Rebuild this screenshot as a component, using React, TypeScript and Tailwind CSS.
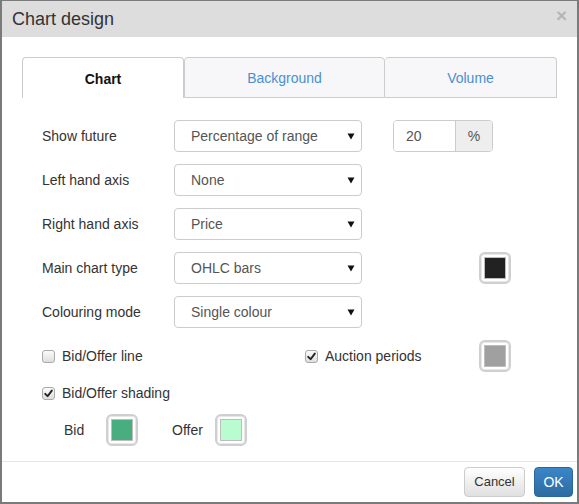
import React from "react";

const font = "font-['Liberation_Sans',Arial,sans-serif]";

function Select({ value }: { value: string }) {
  return (
    <div className="w-[188px] h-[32px] border border-[#cccccc] rounded-[4px] bg-white flex items-center justify-between pl-[16px] pr-[6px] text-[14px] text-[#555]">
      <span>{value}</span>
      <svg width="8" height="8" viewBox="0 0 8 8">
        <path d="M0.5 1.5 L7.5 1.5 L4 7.5 Z" fill="#111" />
      </svg>
    </div>
  );
}

function Swatch({ color }: { color: string }) {
  return (
    <div className="w-[32px] h-[32px] rounded-[6px] border-2 border-[#cfcfcf] bg-white flex items-center justify-center shadow-[inset_0_0_0_1px_#e8e8e8]">
      <div className="w-[22px] h-[22px] border border-[#bdbdbd] flex items-center justify-center bg-white">
        <div className="w-[20px] h-[20px]" style={{ backgroundColor: color }} />
      </div>
    </div>
  );
}

function Check({ checked }: { checked: boolean }) {
  return (
    <div className="w-[13px] h-[13px] rounded-[3px] border border-[#a9a9a9] bg-gradient-to-b from-[#fbfbfb] to-[#dedede] flex items-center justify-center">
      {checked && (
        <svg width="9" height="9" viewBox="0 0 9 9">
          <path d="M1.2 4.8 L3.6 7.2 L7.8 1.6" stroke="#222" strokeWidth="1.9" fill="none" strokeLinecap="round" strokeLinejoin="round" />
        </svg>
      )}
    </div>
  );
}

function Row({ label, children }: { label: string; children: React.ReactNode }) {
  return (
    <div className="flex items-center h-[32px]">
      <div className="w-[132px] text-[14px] text-[#333]">{label}</div>
      {children}
    </div>
  );
}

export default function App() {
  return (
    <div className={`${font} w-[579px] h-[504px] bg-white border-t border-l-2 border-r-2 border-b-2 border-[#7a7a7a] flex flex-col`}>
      <div className="h-[36px] bg-[#dddddd] flex items-center justify-between pl-[10px] pr-[10px]">
        <div className="text-[18px] text-[#333]">Chart design</div>
        <div className="text-[19px] font-bold text-[#b5b5b5] leading-none -mt-[7px]">×</div>
      </div>
      <div className="h-[424px] px-[20px] pt-[20px]">
        <div className="flex h-[41px]">
          <div className="w-[162px] pt-[2px] border-l border-t border-r border-[#cccccc] rounded-t-[4px] bg-white flex items-center justify-center text-[14px] font-bold text-[#111]">
            Chart
          </div>
          <div className="w-[201px] pt-[2px] border border-[#cccccc] rounded-t-[4px] bg-[#f7f7f9] flex items-center justify-center text-[14px] text-[#4a90d0]">
            Background
          </div>
          <div className="w-[172px] pt-[2px] border border-l-0 border-[#cccccc] rounded-t-[4px] bg-[#f7f7f9] flex items-center justify-center text-[14px] text-[#4a90d0]">
            Volume
          </div>
        </div>
        <div className="pl-[20px] pt-[22px] flex flex-col gap-[12px]">
          <Row label="Show future">
            <Select value="Percentage of range" />
            <div className="ml-[31px] flex h-[32px] w-[100px] border border-[#cccccc] rounded-[4px] overflow-hidden text-[14px] text-[#555]">
              <div className="flex-1 flex items-center pl-[12px] bg-white">20</div>
              <div className="w-[37px] bg-[#eeeeee] border-l border-[#cccccc] flex items-center justify-center">%</div>
            </div>
          </Row>
          <Row label="Left hand axis">
            <Select value="None" />
          </Row>
          <Row label="Right hand axis">
            <Select value="Price" />
          </Row>
          <Row label="Main chart type">
            <Select value="OHLC bars" />
            <div className="ml-[117px]">
              <Swatch color="#222222" />
            </div>
          </Row>
          <Row label="Colouring mode">
            <Select value="Single colour" />
          </Row>
          <div className="flex items-center h-[32px]">
            <div className="w-[263px] flex items-center gap-[7px] text-[14px] text-[#333]">
              <Check checked={false} />
              <span>Bid/Offer line</span>
            </div>
            <div className="w-[174px] flex items-center gap-[7px] text-[14px] text-[#333]">
              <Check checked={true} />
              <span>Auction periods</span>
            </div>
            <Swatch color="#a0a0a0" />
          </div>
          <div className="flex items-center h-[20px] -mt-[1px] gap-[7px] text-[14px] text-[#333]">
            <Check checked={true} />
            <span>Bid/Offer shading</span>
          </div>
          <div className="flex items-center h-[32px] -mt-[1px] pl-[22px] text-[14px] text-[#333]">
            <span className="w-[42px]">Bid</span>
            <Swatch color="#48ae80" />
            <span className="ml-[34px] w-[43px]">Offer</span>
            <Swatch color="#b8fcd0" />
          </div>
        </div>
      </div>
      <div className="flex-1 border-t border-[#e5e5e5] flex items-start justify-end pt-[5px] pr-[4px] gap-[9px]">
        <div className="w-[61px] h-[30px] rounded-[4px] border border-[#cccccc] bg-gradient-to-b from-white to-[#e0e0e0] flex items-center justify-center text-[13px] text-[#333]">
          Cancel
        </div>
        <div className="w-[39px] h-[30px] rounded-[4px] border border-[#2b669a] bg-gradient-to-b from-[#3a86c8] to-[#2d6ca2] flex items-center justify-center text-[14px] text-white">
          OK
        </div>
      </div>
    </div>
  );
}
